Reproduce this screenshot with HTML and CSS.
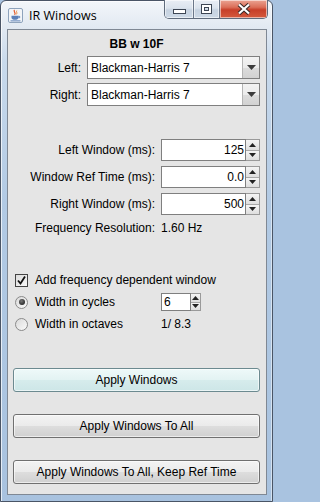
FILE: index.html
```html
<!DOCTYPE html>
<html>
<head>
<meta charset="utf-8">
<link rel="stylesheet" href="styles.css">
</head>
<body>
<div class="window">
  <div class="titlebar">
    <svg class="app-icon" width="15" height="15" viewBox="0 0 15 15">
      <rect x="0.5" y="0.5" width="14" height="14" rx="1.5" fill="#f3f5f8" stroke="#8ea3bc"/>
      <path d="M6.5 1.8 C4.8 3.6 8.6 4.6 6.6 6.8" stroke="#e2592a" fill="none" stroke-width="1.2"/>
      <path d="M8.8 2.6 C7.8 4 9.8 4.6 8.4 6.4" stroke="#e98a3c" fill="none" stroke-width="1"/>
      <path d="M3.5 7.8 h7 v1.6 c0 1.5 -1.6 2.4 -3.5 2.4 s-3.5 -0.9 -3.5 -2.4z" fill="#5b80b8"/>
      <path d="M10.4 8.4 h1.3 v1.3 h-1.3" stroke="#5b80b8" fill="none"/>
      <path d="M2.5 12.9 h10" stroke="#5b80b8"/>
    </svg>
    <span class="title">IR Windows</span>
    <div class="caption">
      <div class="cbtn cmin">
        <svg width="13" height="5" viewBox="0 0 13 5"><rect x="0.5" y="0.5" width="12" height="4" fill="#fff" stroke="#3d4654"/></svg>
      </div>
      <div class="cbtn cmax">
        <svg width="11" height="10" viewBox="0 0 11 10"><rect x="0.5" y="0.5" width="10" height="9" fill="none" stroke="#3d4654"/><rect x="2" y="2" width="7" height="6" fill="none" stroke="#fff" stroke-width="2"/><rect x="3.5" y="3.5" width="4" height="3" fill="none" stroke="#3d4654"/></svg>
      </div>
      <div class="cbtn cclose">
        <svg width="14" height="12" viewBox="0 0 14 12"><path d="M2 1.5 L12 10.5 M12 1.5 L2 10.5" stroke="#3a2a28" stroke-width="4.2"/><path d="M2 1.5 L12 10.5 M12 1.5 L2 10.5" stroke="#fff" stroke-width="2.2"/></svg>
      </div>
    </div>
  </div>

  <div class="panel">
    <div class="heading">BB w 10F</div>

    <div class="combo-grid">
      <span class="lbl">Left:</span>
      <div class="combo">
        <span class="combo-text">Blackman-Harris 7</span>
        <div class="combo-arrow"><svg width="9" height="5" viewBox="0 0 9 5"><path d="M0 0 H9 L4.5 5Z" fill="#3c3c3c"/></svg></div>
      </div>
      <span class="lbl">Right:</span>
      <div class="combo">
        <span class="combo-text">Blackman-Harris 7</span>
        <div class="combo-arrow"><svg width="9" height="5" viewBox="0 0 9 5"><path d="M0 0 H9 L4.5 5Z" fill="#3c3c3c"/></svg></div>
      </div>
    </div>

    <div class="spin-grid">
      <span class="lbl">Left Window (ms):</span>
      <div class="spinner">
        <div class="spin-field">125</div>
        <div class="spin-btns">
          <div class="sb"><svg width="7" height="4" viewBox="0 0 7 4"><path d="M0 4 H7 L3.5 0Z" fill="#222"/></svg></div>
          <div class="sb"><svg width="7" height="4" viewBox="0 0 7 4"><path d="M0 0 H7 L3.5 4Z" fill="#222"/></svg></div>
        </div>
      </div>
      <span class="lbl">Window Ref Time (ms):</span>
      <div class="spinner">
        <div class="spin-field">0.0</div>
        <div class="spin-btns">
          <div class="sb"><svg width="7" height="4" viewBox="0 0 7 4"><path d="M0 4 H7 L3.5 0Z" fill="#222"/></svg></div>
          <div class="sb"><svg width="7" height="4" viewBox="0 0 7 4"><path d="M0 0 H7 L3.5 4Z" fill="#222"/></svg></div>
        </div>
      </div>
      <span class="lbl">Right Window (ms):</span>
      <div class="spinner">
        <div class="spin-field">500</div>
        <div class="spin-btns">
          <div class="sb"><svg width="7" height="4" viewBox="0 0 7 4"><path d="M0 4 H7 L3.5 0Z" fill="#222"/></svg></div>
          <div class="sb"><svg width="7" height="4" viewBox="0 0 7 4"><path d="M0 0 H7 L3.5 4Z" fill="#222"/></svg></div>
        </div>
      </div>
      <span class="lbl freq">Frequency Resolution:</span>
      <span class="val freq">1.60 Hz</span>
    </div>

    <div class="fdw">
      <div class="opt">
        <span class="checkbox"><svg width="11" height="11" viewBox="0 0 11 11"><path d="M2 5.5 L4.5 8.5 L9 1.5" stroke="#111" stroke-width="1.8" fill="none"/></svg></span>
        <span class="opt-text">Add frequency dependent window</span>
      </div>
      <div class="opt-row">
        <div class="opt">
          <span class="radio on"><span class="dot"></span></span>
          <span class="opt-text">Width in cycles</span>
        </div>
        <div class="spinner small">
          <div class="spin-field left">6</div>
          <div class="spin-btns">
            <div class="sb"><svg width="7" height="4" viewBox="0 0 7 4"><path d="M0 4 H7 L3.5 0Z" fill="#222"/></svg></div>
            <div class="sb"><svg width="7" height="4" viewBox="0 0 7 4"><path d="M0 0 H7 L3.5 4Z" fill="#222"/></svg></div>
          </div>
        </div>
      </div>
      <div class="opt-row">
        <div class="opt">
          <span class="radio"></span>
          <span class="opt-text">Width in octaves</span>
        </div>
        <span class="val">1/ 8.3</span>
      </div>
    </div>

    <div class="buttons">
      <div class="btn default">Apply Windows</div>
      <div class="btn">Apply Windows To All</div>
      <div class="btn">Apply Windows To All, Keep Ref Time</div>
    </div>
  </div>
</div>
</body>
</html>
```

FILE: styles.css
```css
html, body {
  margin: 0;
  padding: 0;
}
html {
  background: #a9c3e0;
}
body {
  width: 273px;
  height: 502px;
  overflow: hidden;
  background: #a9c3e0;
  font-family: "Liberation Sans", Arial, sans-serif;
  font-size: 12px;
  color: #111;
}
.window {
  box-sizing: border-box;
  width: 273px;
  height: 502px;
  border: 1px solid #4a5566;
  border-radius: 6px 6px 0 0;
  padding: 0 5px 6px 6px;
  display: flex;
  flex-direction: column;
  background: linear-gradient(180deg, #f3f6fa 0px, #e2e9f2 26px, #c9daec 60px, #b2cae4 200px, #a8c2df 100%);
  box-shadow: inset 1px 1px 0 rgba(255,255,255,0.7), inset -1px 0 0 rgba(255,255,255,0.5);
}
.titlebar {
  height: 28px;
  display: flex;
  align-items: flex-start;
  flex: none;
}
.app-icon {
  margin: 7px 0 0 1px;
  flex: none;
}
.title {
  margin: 6px 0 0 6px;
  font-family: "Open Sans", "Noto Sans", sans-serif;
  font-size: 12.5px;
  line-height: 17px;
  color: #000;
}
.caption {
  margin: -1px -1px 0 auto;
  display: flex;
  height: 19px;
  border: 1px solid #5f6b7c;
  border-top: none;
  border-radius: 0 0 5px 5px;
  overflow: hidden;
  box-sizing: border-box;
}
.cbtn {
  height: 100%;
  display: flex;
  align-items: center;
  justify-content: center;
  box-shadow: inset 0 0 0 1px rgba(255,255,255,0.55);
}
.cmin, .cmax {
  background: linear-gradient(180deg, #e9eef5 0%, #dbe3ed 45%, #c6d2e0 55%, #cdd9e6 100%);
  border-right: 1px solid #6b7789;
}
.cmin { width: 28px; }
.cmin svg { margin-top: 5px; }
.cmax { width: 25px; }
.cclose {
  width: 47px;
  background: linear-gradient(180deg, #eba493 0%, #db6f59 40%, #c73f29 55%, #d45a3d 100%);
}
.panel {
  flex: 1;
  border: 1px solid #7f8894;
  background: #e5e5e5;
  padding: 0 6px 0 5px;
  display: flex;
  flex-direction: column;
}
.heading {
  margin-top: 7px;
  text-align: center;
  font-weight: bold;
  line-height: 15px;
  color: #000;
}
.combo-grid {
  margin-top: 4px;
  display: grid;
  grid-template-columns: 68px 173px;
  column-gap: 6px;
  row-gap: 4px;
}
.lbl {
  text-align: right;
  align-self: center;
  white-space: nowrap;
  color: #000;
}
.combo {
  box-sizing: border-box;
  height: 23px;
  border: 1px solid #7f7f7f;
  background: #fff;
  display: flex;
  align-items: center;
}
.combo-text {
  flex: 1;
  padding-left: 3px;
  color: #000;
}
.combo-arrow {
  width: 16px;
  height: 21px;
  border-left: 1px solid #b5b5b5;
  background: linear-gradient(180deg, #f3f3f3 0%, #ebebeb 50%, #dcdcdc 51%, #d2d2d2 100%);
  display: flex;
  align-items: center;
  justify-content: center;
}
.spin-grid {
  margin-top: 33px;
  display: grid;
  grid-template-columns: 142px 99px;
  column-gap: 6px;
  row-gap: 5px;
}
.spinner {
  box-sizing: border-box;
  height: 22px;
  display: flex;
}
.spin-field {
  flex: 1;
  box-sizing: border-box;
  border: 1px solid #7f7f7f;
  background: #fff;
  text-align: right;
  padding-right: 1px;
  line-height: 20px;
  color: #000;
}
.spin-field.left {
  text-align: left;
  padding-left: 2px;
  line-height: 16px;
}
.spin-btns {
  width: 14px;
  display: flex;
  flex-direction: column;
  box-sizing: border-box;
  border: 1px solid #9a9a9a;
  border-left: none;
}
.sb {
  flex: 1;
  display: flex;
  align-items: center;
  justify-content: center;
  background: linear-gradient(180deg, #f4f4f4, #dedede);
}
.sb + .sb {
  border-top: 1px solid #a8a8a8;
}
.freq {
  line-height: 16px;
}
.val {
  color: #000;
  line-height: 16px;
}
.fdw {
  margin-top: 35px;
  display: flex;
  flex-direction: column;
  gap: 4px;
}
.opt-row {
  display: grid;
  grid-template-columns: 148px 40px;
  align-items: center;
  height: 18px;
}
.opt {
  display: flex;
  align-items: center;
  height: 18px;
  padding-left: 2px;
}
.opt-text {
  margin-left: 7px;
  color: #000;
}
.checkbox {
  box-sizing: border-box;
  width: 13px;
  height: 13px;
  border: 1px solid #444;
  background: linear-gradient(135deg, #dcdcdc, #f8f8f8);
  display: flex;
  align-items: center;
  justify-content: center;
}
.radio {
  box-sizing: border-box;
  width: 13px;
  height: 13px;
  border-radius: 50%;
  border: 1px solid #8a8a8a;
  background: linear-gradient(135deg, #d9d9d9, #fafafa);
  display: flex;
  align-items: center;
  justify-content: center;
}
.dot {
  width: 6px;
  height: 6px;
  border-radius: 50%;
  background: radial-gradient(circle at 40% 35%, #777, #111);
}
.spinner.small {
  height: 18px;
  width: 40px;
}
.spinner.small .spin-btns {
  width: 10px;
}
.buttons {
  margin-top: 35px;
  display: flex;
  flex-direction: column;
  gap: 22px;
}
.btn {
  box-sizing: border-box;
  height: 24px;
  border: 1px solid #707070;
  border-radius: 3px;
  background: linear-gradient(180deg, #f3f3f3 0%, #ebebeb 48%, #dddddd 52%, #d0d0d0 100%);
  box-shadow: inset 0 0 0 1px rgba(255,255,255,0.6);
  text-align: center;
  line-height: 22px;
  color: #000;
}
.btn.default {
  border-color: #6c8a90;
  background: linear-gradient(180deg, #eef9f9 0%, #e3f3f3 48%, #d6ecec 52%, #cde6e7 100%);
}
```
